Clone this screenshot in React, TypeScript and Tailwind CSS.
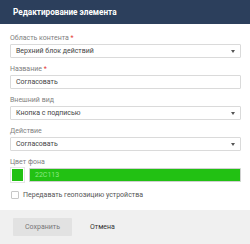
import React from "react";

const font = { fontFamily: "Roboto, 'Noto Sans', sans-serif" };

function Arrow() {
  return (
    <span className="ml-auto mr-[5px] inline-block h-0 w-0 border-x-[2.5px] border-t-[3px] border-x-transparent border-t-[#555]" />
  );
}

function Label({ text, req }: { text: string; req?: boolean }) {
  return (
    <div className="h-[10px] text-[7px] leading-[10px] text-[#808080] mb-[1px]">
      {text}
      {req && <span className="text-[#e53935]"> *</span>}
    </div>
  );
}

function Box({ text, select }: { text: string; select?: boolean }) {
  return (
    <div className="flex h-[14px] items-center rounded-[1px] border border-[#dadada] bg-white pl-[5px] text-[7px] text-[#444]">
      <span>{text}</span>
      {select && <Arrow />}
    </div>
  );
}

export default function App() {
  return (
    <div className="h-[244px] w-[250px] bg-white flex flex-col" style={font}>
      <div className="flex h-[24px] items-center bg-[#2c3f5c] pl-[13px] text-[8.2px] font-bold text-white">
        Редактирование элемента
      </div>
      <div className="flex flex-col gap-[6px] pl-[10px] pr-[9px] pt-[9px]">
        <div>
          <Label text="Область контента" req />
          <Box text="Верхний блок действий" select />
        </div>
        <div>
          <Label text="Название" req />
          <Box text="Согласовать" />
        </div>
        <div>
          <Label text="Внешний вид" />
          <Box text="Кнопка с подписью" select />
        </div>
        <div>
          <Label text="Действие" />
          <Box text="Согласовать" select />
        </div>
        <div>
          <Label text="Цвет фона" />
          <div className="flex h-[14px] items-stretch gap-[5px]">
            <div className="ml-[1px] w-[13px] border border-white bg-[#22c113] outline outline-1 outline-[#e5e5e5]" />
            <div className="flex flex-1 items-center rounded-[1px] border border-[#d0d0d0] bg-[#22c113] pl-[5px] text-[7px] text-[#8de884]">
              22C113
            </div>
          </div>
        </div>
        <div className="mt-[2px] flex items-center gap-[4px] pl-[1px]">
          <div className="h-[8px] w-[8px] rounded-[1px] border border-[#c8c8c8] bg-white" />
          <span className="text-[7px] text-[#555]">Передавать геопозицию устройства</span>
        </div>
      </div>
      <div className="mt-auto flex h-[34px] items-center bg-[#f0f0f0] pl-[13px]">
        <div className="flex h-[18px] w-[59px] items-center justify-center rounded-[1px] bg-[#e2e2e2] text-[7px] text-[#777]">
          Сохранить
        </div>
        <div className="ml-[18px] text-[7px] text-[#333]">Отмена</div>
      </div>
    </div>
  );
}
